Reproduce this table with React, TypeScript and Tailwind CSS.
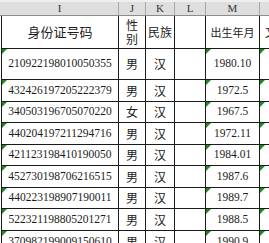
import React from "react"

interface IRow {
    id: string
    sex: string
    nation: string
    birth: string
}

const rows: IRow[] = [
    {id: "210922198010050355", sex: "男", nation: "汉", birth: "1980.10"},
    {id: "432426197205222379", sex: "男", nation: "汉", birth: "1972.5"},
    {id: "340503196705070220", sex: "女", nation: "汉", birth: "1967.5"},
    {id: "440204197211294716", sex: "男", nation: "汉", birth: "1972.11"},
    {id: "421123198410190050", sex: "男", nation: "汉", birth: "1984.01"},
    {id: "452730198706216515", sex: "男", nation: "汉", birth: "1987.6"},
    {id: "440223198907190011", sex: "男", nation: "汉", birth: "1989.7"},
    {id: "522321198805201271", sex: "男", nation: "汉", birth: "1988.5"},
    {id: "370982199009150610", sex: "男", nation: "汉", birth: "1990.9"},
]

// row heights after the title row
const heights = ["h-[31px]", "h-[22px]", "h-[21px]", "h-[22px]", "h-[21px]", "h-[22px]", "h-[21px]", "h-[22px]", "h-[22px]"]

const cjk = "font-['Noto_Sans_CJK_SC',sans-serif]"
const num = "font-['Liberation_Serif',serif]"

function Flag() {
    return <span className="absolute top-0 left-0 w-0 h-0 border-t-[5px] border-t-[#1f8a1f] border-r-[5px] border-r-transparent"/>
}

export default function App() {
    return (
        <div className="w-[269px] h-[243px] overflow-hidden bg-white text-[#1c1c1c]">
            {/* column letters */}
            <div className="flex h-[16px] bg-[#dedede] border-t-2 border-t-[#efefef] border-b border-b-[#8c8c8c] text-[11px] text-[#333] leading-none">
                <div className="w-[1px]"/>
                {[["I", "w-[118px]"], ["J", "w-[27px]"], ["K", "w-[29px]"], ["L", "w-[31px]"], ["M", "w-[54px]"]].map(([l, w]) => (
                    <div key={l} className={`${w} ${num} flex items-center justify-center border-r border-r-[#a8a8a8]`}>{l}</div>
                ))}
                <div className="flex-1"/>
            </div>

            <div className="ml-[1px] border-l border-l-[#1a1a1a]">
                {/* title row */}
                <div className={`flex h-[33px] border-b border-b-[#1a1a1a] ${cjk}`}>
                    <div className="w-[117px] flex items-center justify-center border-r border-r-[#1a1a1a] text-[13px]">身份证号码</div>
                    <div className="w-[27px] flex items-center justify-center border-r border-r-[#1a1a1a] text-[12px] leading-[14px] text-center">
                        性<br/>别
                    </div>
                    <div className="w-[29px] flex items-center justify-center border-r border-r-[#1a1a1a] text-[12px]">民族</div>
                    <div className="w-[31px] border-r border-r-[#1a1a1a]"/>
                    <div className="w-[54px] flex items-center justify-center border-r border-r-[#1a1a1a] text-[11px]">出生年月</div>
                    <div className="flex-1 flex items-center pl-[5px] text-[12px] whitespace-nowrap overflow-hidden">文化</div>
                </div>

                {rows.map((r, i) => (
                    <div key={r.id} className={`flex ${heights[i]} border-b border-b-[#1a1a1a]`}>
                        <div className={`relative w-[117px] flex items-center justify-center border-r border-r-[#1a1a1a] text-[11.5px] ${num}`}>
                            <Flag/>{r.id}
                        </div>
                        <div className={`w-[27px] flex items-center justify-center border-r border-r-[#1a1a1a] text-[12px] ${cjk}`}>{r.sex}</div>
                        <div className={`w-[29px] flex items-center justify-center border-r border-r-[#1a1a1a] text-[12px] ${cjk}`}>{r.nation}</div>
                        <div className="w-[31px] border-r border-r-[#1a1a1a]"/>
                        <div className={`relative w-[54px] flex items-center justify-center border-r border-r-[#1a1a1a] text-[11.5px] ${num}`}>
                            <Flag/>{r.birth}
                        </div>
                        <div className="relative flex-1"><Flag/></div>
                    </div>
                ))}
            </div>
        </div>
    )
}
